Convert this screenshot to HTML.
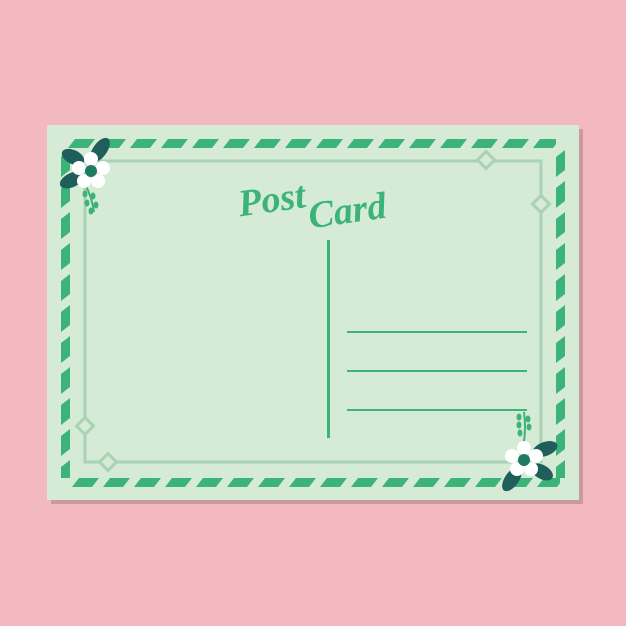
<!DOCTYPE html>
<html><head><style>
body{margin:0;background:#f3b8c0;}
svg{display:block}
</style></head><body>
<svg width="626" height="626" viewBox="0 0 626 626" xmlns="http://www.w3.org/2000/svg">
<defs>
<pattern id="ph" x="0" y="0" width="31" height="626" patternUnits="userSpaceOnUse">
<polygon points="9,0 29,0 22,9 2,9" fill="#3cb378"/>
</pattern>
<pattern id="pv" x="0" y="0" width="626" height="31" patternUnits="userSpaceOnUse">
<polygon points="9,2 9,22 0,29 0,9" fill="#3cb378"/>
</pattern>
</defs>
<rect x="0" y="0" width="626" height="626" fill="#f3b8c0"/>
<rect x="51" y="129" width="532" height="375" fill="#c89ba0"/>
<rect x="47" y="125" width="532" height="375" fill="#d5ebd6"/>
<g transform="translate(66,139)"><rect x="0" y="0" width="490" height="9" fill="url(#ph)"/></g>
<g transform="translate(70,478)"><rect x="0" y="0" width="490" height="9" fill="url(#ph)"/></g>
<g transform="translate(61,148)"><rect x="0" y="0" width="9" height="330" fill="url(#pv)"/></g>
<g transform="translate(556,148)"><rect x="0" y="0" width="9" height="330" fill="url(#pv)"/></g>
<rect x="85" y="161" width="456" height="301" fill="none" stroke="#a9d3b4" stroke-width="3"/>
<g fill="#d5ebd6" stroke="#a9d3b4" stroke-width="3">
<rect x="480" y="154" width="12" height="12" transform="rotate(45 486 160)"/>
<rect x="535" y="198" width="12" height="12" transform="rotate(45 541 204)"/>
<rect x="79" y="420" width="12" height="12" transform="rotate(45 85 426)"/>
<rect x="102" y="456" width="12" height="12" transform="rotate(45 108 462)"/>
</g>
<rect x="327" y="240" width="3" height="198" fill="#3cb378"/>
<rect x="347" y="331" width="180" height="2" fill="#3cb378"/>
<rect x="347" y="370" width="180" height="2" fill="#3cb378"/>
<rect x="347" y="409" width="180" height="2" fill="#3cb378"/>
<text x="238" y="212" font-family="'Liberation Serif',serif" font-style="italic" font-weight="bold" font-size="38" fill="#3cb378" transform="rotate(-8 270 200)">Post</text>
<text x="308" y="224" font-family="'Liberation Serif',serif" font-style="italic" font-weight="bold" font-size="38" fill="#3cb378" transform="rotate(-8 340 210)">Card</text>
<g>
<path d="M86 186 q6 12 8 26" stroke="#3cb378" stroke-width="2" fill="none"/>
<g fill="#3cb378"><ellipse cx="85" cy="194" rx="2.5" ry="3.5"/><ellipse cx="93" cy="196" rx="2.5" ry="3.5"/><ellipse cx="87" cy="203" rx="2.5" ry="3.5"/><ellipse cx="96" cy="205" rx="2.5" ry="3.5"/><ellipse cx="91" cy="211" rx="2.5" ry="3.5"/></g>
<ellipse cx="73" cy="157" rx="12" ry="7" fill="#1f5e5a" transform="rotate(25 73 157)"/>
<ellipse cx="100" cy="150" rx="14" ry="7" fill="#1f5e5a" transform="rotate(-55 100 150)"/>
<ellipse cx="72" cy="180" rx="13" ry="7" fill="#1f5e5a" transform="rotate(-25 72 180)"/>
<g fill="#ffffff"><circle cx="91" cy="159" r="7"/><circle cx="103" cy="168" r="7"/><circle cx="98" cy="181" r="7"/><circle cx="84" cy="181" r="7"/><circle cx="79" cy="168" r="7"/></g>
<circle cx="91" cy="171" r="6" fill="#1f7a62"/>
</g>
<g>
<path d="M524 412 q2 14 0 30" stroke="#3cb378" stroke-width="2" fill="none"/>
<g fill="#3cb378"><ellipse cx="519" cy="417" rx="2.5" ry="3.5"/><ellipse cx="528" cy="419" rx="2.5" ry="3.5"/><ellipse cx="519" cy="425" rx="2.5" ry="3.5"/><ellipse cx="529" cy="427" rx="2.5" ry="3.5"/><ellipse cx="520" cy="433" rx="2.5" ry="3.5"/></g>
<ellipse cx="545" cy="449" rx="13" ry="7" fill="#1f5e5a" transform="rotate(-20 545 449)"/>
<ellipse cx="542" cy="472" rx="12" ry="7" fill="#1f5e5a" transform="rotate(30 542 472)"/>
<ellipse cx="512" cy="479" rx="14" ry="7" fill="#1f5e5a" transform="rotate(-55 512 479)"/>
<g fill="#ffffff"><circle cx="524" cy="448" r="7"/><circle cx="536" cy="456" r="7"/><circle cx="531" cy="469" r="7"/><circle cx="517" cy="469" r="7"/><circle cx="512" cy="456" r="7"/></g>
<circle cx="524" cy="460" r="6" fill="#1f7a62"/>
</g>
</svg>
</body></html>
